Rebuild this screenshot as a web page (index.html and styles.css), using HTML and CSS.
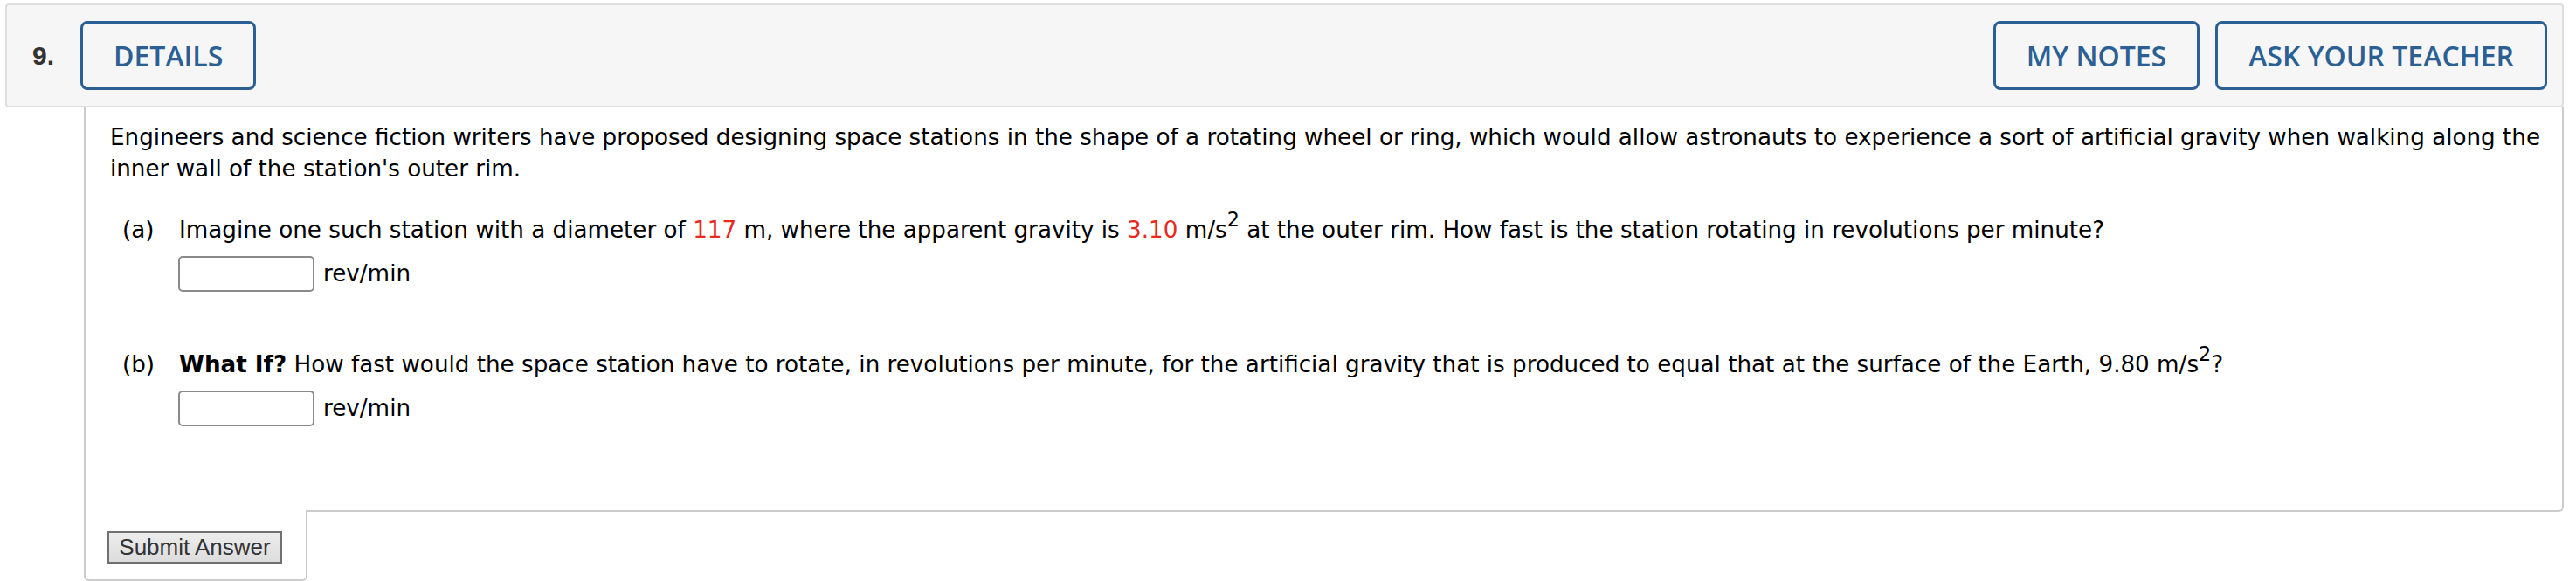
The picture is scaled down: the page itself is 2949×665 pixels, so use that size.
FILE: index.html
```html
<!DOCTYPE html>
<html lang="en">
<head>
<meta charset="utf-8">
<title>Question 9</title>
<link rel="stylesheet" href="styles.css">
</head>
<body>
<div class="page">
  <div class="qhead">
    <span class="qnum">9.</span>
    <button class="hbtn">DETAILS</button>
    <div class="spacer"></div>
    <div class="hbtns">
      <button class="hbtn">MY NOTES</button>
      <button class="hbtn">ASK YOUR TEACHER</button>
    </div>
  </div>
  <div class="qbody">
    <p class="intro">Engineers and science fiction writers have proposed designing space stations in the shape of a rotating wheel or ring, which would allow astronauts to experience a sort of artificial gravity when walking along the inner wall of the station's outer rim.</p>
    <div class="part part-a">
      <div class="pline"><span class="plabel">(a)</span><span class="ptext">Imagine one such station with a diameter of <span class="red">117</span> m, where the apparent gravity is <span class="red">3.10</span> m/s<sup>2</sup> at the outer rim. How fast is the station rotating in revolutions per minute?</span></div>
      <div class="ans"><input class="box" type="text"><span class="unit">rev/min</span></div>
    </div>
    <div class="part part-b">
      <div class="pline"><span class="plabel">(b)</span><span class="ptext"><b>What If?</b> How fast would the space station have to rotate, in revolutions per minute, for the artificial gravity that is produced to equal that at the surface of the Earth, 9.80 m/s<sup>2</sup>?</span></div>
      <div class="ans"><input class="box" type="text"><span class="unit">rev/min</span></div>
    </div>
  </div>
  <div class="submit-tab">
    <button class="submit">Submit Answer</button>
  </div>
</div>
</body>
</html>
```
FILE: styles.css
```css
html, body {
  margin: 0;
  padding: 0;
  background: #ffffff;
}

.page {
  padding: 4px 14px 0 6px;
  font-family: "DejaVu Sans", Verdana, sans-serif;
  color: #000;
}

.qhead {
  display: flex;
  align-items: center;
  box-sizing: border-box;
  height: 119px;
  padding: 0 17px 0 29px;
  background: #f6f6f6;
  border: 2px solid #dedede;
  border-radius: 4px;
}

.qnum {
  font-family: "Liberation Sans", Arial, sans-serif;
  font-weight: bold;
  font-size: 30px;
  color: #333;
  margin-right: 30px;
}

.spacer {
  flex: 1;
}

.hbtns {
  display: flex;
  gap: 18px;
}

.hbtn {
  height: 79px;
  box-sizing: border-box;
  padding: 0 35px;
  background: transparent;
  border: 3px solid #2b6094;
  border-radius: 8px;
  color: #2b6094;
  font-family: "Open Sans", sans-serif;
  font-weight: 600;
  font-size: 32px;
}

.qbody {
  margin-left: 90px;
  border-left: 2px solid #cccccc;
  border-right: 2px solid #cccccc;
  border-bottom: 2px solid #cccccc;
  border-bottom-right-radius: 6px;
  padding: 0 12px 96px 28px;
  font-size: 26.2px;
  line-height: 36px;
}

.intro {
  margin: 0;
  padding-top: 16px;
}

.part {
  margin-top: 34px;
}

.part-b {
  margin-top: 65px;
}

.pline {
  display: flex;
  padding-left: 14px;
}

.plabel {
  width: 65px;
  flex: none;
}

.ptext sup {
  font-size: 85%;
  line-height: 0;
  vertical-align: 0.6em;
}

.red {
  color: #e8281c;
}

.ans {
  display: flex;
  align-items: center;
  margin-top: 12px;
  padding-left: 78px;
}

.box {
  width: 156px;
  height: 41px;
  box-sizing: border-box;
  border: 2px solid #8a8a8a;
  border-radius: 5px;
  margin: 0 10px 0 0;
  padding: 0 6px;
  font-family: "DejaVu Sans", sans-serif;
  font-size: 24px;
}

.unit {
  line-height: 41px;
}

.submit-tab {
  margin-left: 90px;
  margin-top: -2px;
  width: 256px;
  box-sizing: border-box;
  height: 81px;
  padding: 24px 0 0 25px;
  background: #fff;
  border-left: 2px solid #cccccc;
  border-right: 2px solid #cccccc;
  border-bottom: 2px solid #cccccc;
  border-radius: 0 0 6px 6px;
}

.submit {
  display: block;
  width: 200px;
  height: 37px;
  box-sizing: border-box;
  padding: 0;
  border: 2px solid #707070;
  border-radius: 0;
  background: linear-gradient(#ededed, #dcdcdc);
  font-family: "Liberation Sans", Arial, sans-serif;
  font-size: 26px;
  color: #333;
}
```
